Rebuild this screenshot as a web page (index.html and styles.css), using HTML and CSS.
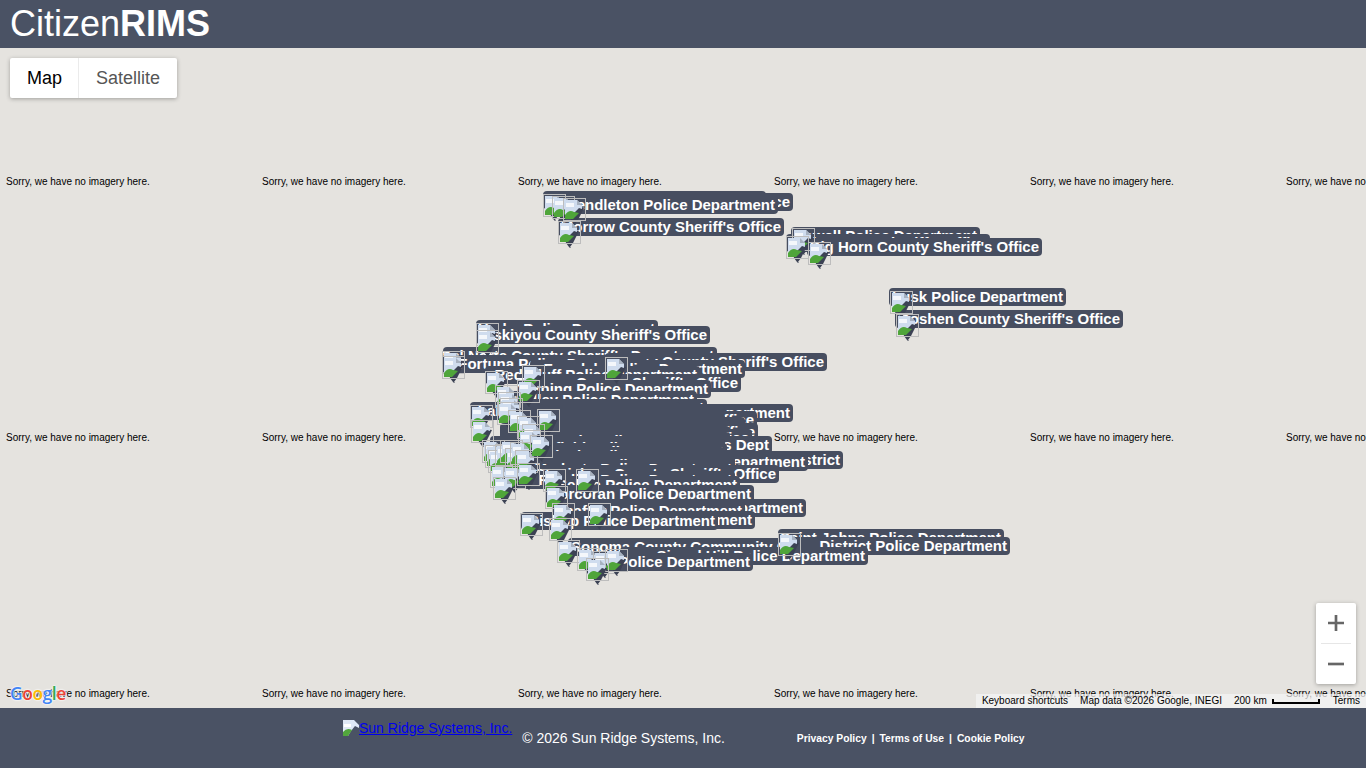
FILE: index.html
```html
<!DOCTYPE html>
<html lang="en">
<head>
<meta charset="utf-8">
<title>CitizenRIMS</title>
<link rel="stylesheet" href="styles.css">
</head>
<body>
<svg class="defs" width="0" height="0" aria-hidden="true">
  <symbol id="pin" viewBox="0 0 23 27">
    <path d="M13 9 L21 10 L15 22 L12 26 H11 L8 22 L7 17z" fill="#3c4254"/>
    <rect x=".5" y=".5" width="22" height="22" fill="none" stroke="#bdbdbd"/>
    <path d="M2 2 H14 L19 7 V11 L16 10 L11 15 L7 21 H2z" fill="#cfdcee"/>
    <path d="M3 5 H11 V9 H3z" fill="#f4f7fb"/>
    <path d="M14 2 V7 H19z" fill="#a7b1bf"/>
    <path d="M2 21 V17 Q6 11 11 14 L16 15 L10 21z" fill="#4fa53a"/>
    <path d="M11.500 26h1v1h-1z" fill="#3c4254"/>
  </symbol>
</svg>
<header class="topbar">
  <h1 class="brand">Citizen<b>RIMS</b></h1>
</header>
<main class="map">
  <div class="tiles">
    <span>Sorry, we have no imagery here.</span><span>Sorry, we have no imagery here.</span><span>Sorry, we have no imagery here.</span><span>Sorry, we have no imagery here.</span><span>Sorry, we have no imagery here.</span><span>Sorry, we have no imagery here.</span>
    <span>Sorry, we have no imagery here.</span><span>Sorry, we have no imagery here.</span><span>Sorry, we have no imagery here.</span><span>Sorry, we have no imagery here.</span><span>Sorry, we have no imagery here.</span><span>Sorry, we have no imagery here.</span>
    <span>Sorry, we have no imagery here.</span><span>Sorry, we have no imagery here.</span><span>Sorry, we have no imagery here.</span><span>Sorry, we have no imagery here.</span><span>Sorry, we have no imagery here.</span><span>Sorry, we have no imagery here.</span>
  </div>
  <div class="labels">
    <div class="label" style="left:543px;width:223px;top:143px">Hermiston Police Department</div>
    <div class="label" style="left:552px;width:241px;top:145px">Umatilla County Sheriff's Office</div>
    <div class="label" style="left:552px;width:226px;top:148px">Pendleton Police Department</div>
    <div class="label" style="left:558px;width:226px;top:170px">Morrow County Sheriff's Office</div>
    <div class="label" style="left:791px;width:189px;top:179px">Powell Police Department</div>
    <div class="label" style="left:786px;width:204px;top:186px">Park County Sheriff's Office</div>
    <div class="label" style="left:807px;width:235px;top:190px">Big Horn County Sheriff's Office</div>
    <div class="label" style="left:889px;width:177px;top:240px">Lusk Police Department</div>
    <div class="label" style="left:895px;width:228px;top:262px">Goshen County Sheriff's Office</div>
    <div class="label" style="left:476px;width:182px;top:272px">Yreka Police Department</div>
    <div class="label" style="left:476px;width:234px;top:278px">Siskiyou County Sheriff's Office</div>
    <div class="label" style="left:443px;width:274px;top:299px">Del Norte County Sheriff's Department</div>
    <div class="label" style="left:605px;width:222px;top:305px">Trinity County Sheriff's Office</div>
    <div class="label" style="left:442px;width:211px;top:307px">Fortuna Police Department</div>
    <div class="label" style="left:530px;width:215px;top:312px">Ferndale Police Department</div>
    <div class="label" style="left:485px;width:215px;top:318px">Red Bluff Police Department</div>
    <div class="label" style="left:517px;width:224px;top:326px">Tehama County Sheriff's Office</div>
    <div class="label" style="left:517px;width:194px;top:332px">Corning Police Department</div>
    <div class="label" style="left:497px;width:200px;top:343px">Gridley Police Department</div>
    <div class="label" style="left:505px;width:202px;top:351px">Willows Police Department</div>
    <div class="label" style="left:470px;width:210px;top:354px">Lakeport Police Department</div>
    <div class="label" style="left:540px;width:253px;top:356px">Clearlake Police Department</div>
    <div class="label" style="left:520px;width:205px;top:358px">Ukiah Police Department</div>
    <div class="label" style="left:520px;width:205px;top:361px">Willits Police Department</div>
    <div class="label" style="left:505px;width:252px;top:363px">Colusa County Sheriff's Office</div>
    <div class="label" style="left:520px;width:205px;top:366px">Napa Police Department</div>
    <div class="label" style="left:505px;width:240px;top:369px">Glenn County Sheriff's Office</div>
    <div class="label" style="left:520px;width:210px;top:372px">Petaluma Police Department</div>
    <div class="label" style="left:500px;width:258px;top:375px">Yuba County Sheriff's Office</div>
    <div class="label" style="left:520px;width:210px;top:378px">Vallejo Police Department</div>
    <div class="label" style="left:500px;width:252px;top:381px">Sutter County Sheriff's Office</div>
    <div class="label" style="left:520px;width:210px;top:384px">Davis Police Department</div>
    <div class="label" style="left:490px;width:282px;top:388px">Sacramento County Sheriff's Dept</div>
    <div class="label" style="left:520px;width:205px;top:391px">Fairfield Police Department</div>
    <div class="label" style="left:490px;width:237px;top:395px">Elk Grove Police Department</div>
    <div class="label" style="left:520px;width:205px;top:399px">Antioch Police Department</div>
    <div class="label" style="left:500px;width:343px;top:403px">Consolidated Fire Protection District</div>
    <div class="label" style="left:495px;width:313px;top:405px">Stockton Police Department</div>
    <div class="label" style="left:510px;width:225px;top:408px">Manteca Police Department</div>
    <div class="label" style="left:510px;width:225px;top:412px">Modesto Police Department</div>
    <div class="label" style="left:520px;width:259px;top:417px">Stanislaus County Sheriff's Office</div>
    <div class="label" style="left:497px;width:238px;top:423px">Reedley Police Department</div>
    <div class="label" style="left:560px;width:180px;top:428px">Selma Police Department</div>
    <div class="label" style="left:545px;width:209px;top:437px">Corcoran Police Department</div>
    <div class="label" style="left:552px;width:254px;top:451px">Porterville Police Department</div>
    <div class="label" style="left:552px;width:193px;top:454px">Shafter Police Department</div>
    <div class="label" style="left:552px;width:203px;top:463px">Delano Police Department</div>
    <div class="label" style="left:521px;width:197px;top:464px">Bishop Police Department</div>
    <div class="label" style="left:778px;width:226px;top:481px">Saint Johns Police Department</div>
    <div class="label" style="left:778px;width:232px;top:489px">District Police Department</div>
    <div class="label label-start" style="left:568px;width:225px;top:490px">Sonoma County Community College</div>
    <div class="label" style="left:620px;width:248px;top:499px">Signal Hill Police Department</div>
    <div class="label" style="left:590px;width:163px;top:505px">Police Department</div>
  </div>
  <div class="pins">
    <svg class="pin" style="left:543px;top:146px"><use href="#pin"/></svg>
    <svg class="pin" style="left:552px;top:148px"><use href="#pin"/></svg>
    <svg class="pin" style="left:563px;top:150px"><use href="#pin"/></svg>
    <svg class="pin" style="left:558px;top:173px"><use href="#pin"/></svg>
    <svg class="pin" style="left:792px;top:180px"><use href="#pin"/></svg>
    <svg class="pin" style="left:786px;top:188px"><use href="#pin"/></svg>
    <svg class="pin" style="left:808px;top:194px"><use href="#pin"/></svg>
    <svg class="pin" style="left:890px;top:243px"><use href="#pin"/></svg>
    <svg class="pin" style="left:896px;top:266px"><use href="#pin"/></svg>
    <svg class="pin" style="left:476px;top:275px"><use href="#pin"/></svg>
    <svg class="pin" style="left:476px;top:282px"><use href="#pin"/></svg>
    <svg class="pin" style="left:442px;top:303px"><use href="#pin"/></svg>
    <svg class="pin" style="left:442px;top:308px"><use href="#pin"/></svg>
    <svg class="pin" style="left:605px;top:309px"><use href="#pin"/></svg>
    <svg class="pin" style="left:485px;top:323px"><use href="#pin"/></svg>
    <svg class="pin" style="left:522px;top:317px"><use href="#pin"/></svg>
    <svg class="pin" style="left:517px;top:332px"><use href="#pin"/></svg>
    <svg class="pin" style="left:495px;top:337px"><use href="#pin"/></svg>
    <svg class="pin" style="left:498px;top:344px"><use href="#pin"/></svg>
    <svg class="pin" style="left:500px;top:350px"><use href="#pin"/></svg>
    <svg class="pin" style="left:497px;top:354px"><use href="#pin"/></svg>
    <svg class="pin" style="left:470px;top:357px"><use href="#pin"/></svg>
    <svg class="pin" style="left:471px;top:372px"><use href="#pin"/></svg>
    <svg class="pin" style="left:537px;top:361px"><use href="#pin"/></svg>
    <svg class="pin" style="left:508px;top:362px"><use href="#pin"/></svg>
    <svg class="pin" style="left:517px;top:368px"><use href="#pin"/></svg>
    <svg class="pin" style="left:522px;top:376px"><use href="#pin"/></svg>
    <svg class="pin" style="left:518px;top:382px"><use href="#pin"/></svg>
    <svg class="pin" style="left:482px;top:392px"><use href="#pin"/></svg>
    <svg class="pin" style="left:485px;top:397px"><use href="#pin"/></svg>
    <svg class="pin" style="left:488px;top:402px"><use href="#pin"/></svg>
    <svg class="pin" style="left:495px;top:396px"><use href="#pin"/></svg>
    <svg class="pin" style="left:500px;top:392px"><use href="#pin"/></svg>
    <svg class="pin" style="left:505px;top:400px"><use href="#pin"/></svg>
    <svg class="pin" style="left:510px;top:394px"><use href="#pin"/></svg>
    <svg class="pin" style="left:515px;top:402px"><use href="#pin"/></svg>
    <svg class="pin" style="left:530px;top:387px"><use href="#pin"/></svg>
    <svg class="pin" style="left:490px;top:417px"><use href="#pin"/></svg>
    <svg class="pin" style="left:503px;top:418px"><use href="#pin"/></svg>
    <svg class="pin" style="left:517px;top:415px"><use href="#pin"/></svg>
    <svg class="pin" style="left:493px;top:429px"><use href="#pin"/></svg>
    <svg class="pin" style="left:543px;top:421px"><use href="#pin"/></svg>
    <svg class="pin" style="left:576px;top:421px"><use href="#pin"/></svg>
    <svg class="pin" style="left:545px;top:438px"><use href="#pin"/></svg>
    <svg class="pin" style="left:552px;top:455px"><use href="#pin"/></svg>
    <svg class="pin" style="left:588px;top:455px"><use href="#pin"/></svg>
    <svg class="pin" style="left:520px;top:465px"><use href="#pin"/></svg>
    <svg class="pin" style="left:549px;top:470px"><use href="#pin"/></svg>
    <svg class="pin" style="left:557px;top:492px"><use href="#pin"/></svg>
    <svg class="pin" style="left:577px;top:500px"><use href="#pin"/></svg>
    <svg class="pin" style="left:593px;top:503px"><use href="#pin"/></svg>
    <svg class="pin" style="left:605px;top:501px"><use href="#pin"/></svg>
    <svg class="pin" style="left:586px;top:510px"><use href="#pin"/></svg>
    <svg class="pin" style="left:778px;top:485px"><use href="#pin"/></svg>
  </div>
  <div class="map-type">
    <button class="type active">Map</button>
    <button class="type">Satellite</button>
  </div>
  <div class="zoom">
    <button class="zoom-btn" aria-label="Zoom in">
      <svg width="16" height="16" viewBox="0 0 18 18"><path d="M18 7.500H10.500V0h-3v7.500H0v3h7.500V18h3v-7.500H18z" fill="#666"/></svg>
    </button>
    <span class="zoom-rule"></span>
    <button class="zoom-btn" aria-label="Zoom out">
      <svg width="16" height="16" viewBox="0 0 18 18"><path d="M0 7.500h18v3H0z" fill="#666"/></svg>
    </button>
  </div>
  <div class="google"><i class="g1">G</i><i class="g2">o</i><i class="g3">o</i><i class="g1">g</i><i class="g4">l</i><i class="g2">e</i></div>
  <div class="attribution">
    <span class="attr-item">Keyboard shortcuts</span>
    <span class="attr-item">Map data ©2026 Google, INEGI</span>
    <span class="attr-item scale">200 km<span class="scale-bar"></span></span>
    <span class="attr-item">Terms</span>
  </div>
</main>
<footer class="footer">
  <a class="vendor" href="#">
    <svg class="broken" width="16" height="16" viewBox="0 0 16 16"><path d="M0 0H11L16 5V8L12 6L8 11L5 16H0z" fill="#dfe8f5"/><path d="M1 4H8V7H1z" fill="#fff"/><path d="M0 16V12Q4 7 9 10L5 16z" fill="#52a63c"/></svg>Sun Ridge Systems, Inc.</a>
  <span class="copy">© 2026 Sun Ridge Systems, Inc.</span>
  <nav class="legal">
    <a href="#">Privacy Policy</a><span>|</span><a href="#">Terms of Use</a><span>|</span><a href="#">Cookie Policy</a>
  </nav>
</footer>
</body>
</html>
```
FILE: styles.css
```css
* { box-sizing: border-box; }
html, body { margin: 0; height: 100%; }
body {
  width: 1366px;
  height: 768px;
  overflow: hidden;
  display: flex;
  flex-direction: column;
  font-family: "Liberation Sans", Arial, sans-serif;
  background: #e5e3df;
}
.defs { position: absolute; }
.topbar {
  height: 48px;
  flex: none;
  background: #4a5264;
  padding-left: 10px;
}
.brand {
  margin: 0;
  font-size: 36px;
  line-height: 47px;
  font-weight: 400;
  color: #fff;
}
.brand b { font-weight: 700; }
.map {
  position: relative;
  flex: 1;
  overflow: hidden;
  background: #e5e3df;
}
.tiles {
  display: grid;
  grid-template-columns: repeat(6, 256px);
  grid-auto-rows: 256px;
  padding: 128px 0 0 6px;
  font-size: 10px;
  line-height: 12px;
  color: #000;
  white-space: nowrap;
}
.labels, .pins { position: absolute; inset: 0; }
.label {
  position: absolute;
  display: flex;
  justify-content: flex-end;
  height: 18px;
  padding: 0 3px;
  border-radius: 4px;
  background: #474e60;
  color: #fff;
  font-size: 15px;
  font-weight: 700;
  line-height: 18px;
  white-space: nowrap;
  overflow: hidden;
}
.label-start { justify-content: flex-start; }
.pin { position: absolute; width: 23px; height: 27px; }
.map-type {
  position: absolute;
  left: 10px;
  top: 10px;
  display: flex;
  height: 40px;
  border-radius: 2px;
  background: #fff;
  box-shadow: 0 1px 4px rgba(0, 0, 0, .3);
}
.type {
  border: 0;
  background: none;
  padding: 0 17px;
  font: 18px "Liberation Sans", Arial, sans-serif;
  color: #565656;
}
.type.active { color: #000; padding-right: 16px; border-right: 1px solid #ebebeb; }
.zoom {
  position: absolute;
  right: 10px;
  bottom: 24px;
  width: 40px;
  height: 81px;
  display: flex;
  flex-direction: column;
  align-items: center;
  background: #fff;
  border-radius: 2px;
  box-shadow: 0 1px 4px rgba(0, 0, 0, .3);
}
.zoom-btn {
  width: 40px;
  height: 40px;
  border: 0;
  padding: 0;
  background: none;
  display: flex;
  align-items: center;
  justify-content: center;
}
.zoom-rule { width: 30px; height: 1px; flex: none; background: #e6e6e6; }
.google {
  position: absolute;
  left: 10px;
  bottom: 4px;
  font-family: "Open Sans", sans-serif;
  font-size: 17.500px;
  line-height: 22px;
  font-weight: 600;
  letter-spacing: -.5px;
  text-shadow: 0 0 2px #fff, 0 0 2px #fff, 0 0 1px #fff;
}
.google i { font-style: normal; }
.g1 { color: #4285f4; }
.g2 { color: #ea4335; }
.g3 { color: #fbbc05; }
.g4 { color: #34a853; }
.attribution {
  position: absolute;
  right: 0;
  bottom: 0;
  height: 14px;
  display: flex;
  font-size: 10px;
  line-height: 14px;
  color: #000;
}
.attr-item {
  display: flex;
  align-items: center;
  padding: 0 6px;
  background: rgba(245, 245, 245, .7);
}
.attr-item.scale { padding-right: 7px; }
.scale-bar {
  width: 48px;
  height: 5px;
  margin-left: 5px;
  border: 2px solid #000;
  border-top: 0;
}
.footer {
  height: 60px;
  flex: none;
  background: #4a5264;
  display: flex;
  padding-left: 343px;
  color: #fff;
  font-size: 14px;
}
.vendor {
  color: #00e;
  line-height: 16px;
  margin-top: 12px;
  height: 17px;
  white-space: nowrap;
}
.broken { vertical-align: -3px; }
.copy { margin: 22px 0 0 10px; line-height: 16px; }
.legal {
  margin: 24px 0 0 72px;
  display: flex;
  gap: 5px;
  font-size: 10.300px;
  font-weight: 700;
  line-height: 13px;
}
.legal a { color: #fff; text-decoration: none; }
```
